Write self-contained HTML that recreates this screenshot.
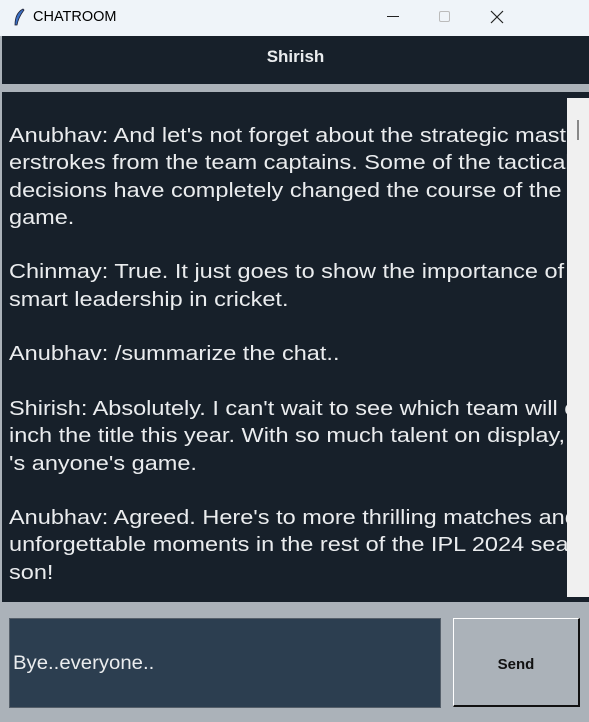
<!DOCTYPE html>
<html><head><style>
*{margin:0;padding:0;box-sizing:border-box}
body{width:589px;height:722px;overflow:hidden;background:#abb2b9;font-family:"Liberation Sans",sans-serif;position:relative}
.tb{position:absolute;left:0;top:0;width:589px;height:36px;background:#eff4f9}
.tb .t{position:absolute;left:33px;top:9px;font-size:14.5px;color:#000}
.hdr{position:absolute;left:2px;top:36px;width:587px;height:48px;background:#17202a;color:#eaecee;font-weight:bold;font-size:17px;text-align:center;line-height:42px}
.gb{position:absolute;left:0;top:84px;width:589px;height:8px;background:#abb2b9}
.chat{position:absolute;left:2px;top:92px;width:587px;height:510px;background:#17202a;overflow:hidden}
.clip{position:absolute;left:0;top:0;width:565px;height:510px;overflow:hidden}
.txt{position:absolute;left:7px;top:31px;color:#eaecee;font-size:20px;line-height:27.3px;white-space:pre;transform:scaleX(1.175);transform-origin:0 0}
.sb{position:absolute;left:565px;top:6px;width:22px;height:499px;background:#f0f0f0}
.sb i{position:absolute;left:10px;top:22px;width:2px;height:20px;background:#888}
.inp{position:absolute;left:9px;top:618px;width:432px;height:90px;background:#2c3e50;border:1px solid #555f6a}
.inp span{position:absolute;left:3px;top:34px;color:#eaecee;font-size:19px;transform:scaleX(1.07);transform-origin:0 0}
.btn{position:absolute;left:453px;top:618px;width:127px;height:89px;background:#abb2b9;border-top:1px solid #fff;border-left:1px solid #fff;border-right:2px solid #111;border-bottom:2px solid #111;text-align:center;line-height:92px;font-weight:bold;font-size:15px;color:#111}
</style></head><body>
<div class="tb"><svg style="position:absolute;left:12px;top:8px" width="14" height="20" viewBox="0 0 14 20"><path d="M11 1 C5 4 3 10 3 17 L5 17 C6 11 9 6 12 2Z" fill="#3a6fc4" stroke="#223" stroke-width=".8"/></svg><span class="t">CHATROOM</span>
<div style="position:absolute;left:387px;top:16px;width:12px;height:1px;background:#222"></div>
<div style="position:absolute;left:439px;top:11px;width:11px;height:11px;border:1px solid #bbb;border-radius:2px"></div>
<svg style="position:absolute;left:490px;top:10px" width="14" height="14"><path d="M1 1L13 13M13 1L1 13" stroke="#222" stroke-width="1.2"/></svg></div>
<div class="hdr">Shirish</div>
<div class="gb"></div>
<div class="chat"><div class="clip"><div class="txt">Anubhav: And let's not forget about the strategic mast
erstrokes from the team captains. Some of the tactical
decisions have completely changed the course of the
game.

Chinmay: True. It just goes to show the importance of
smart leadership in cricket.

Anubhav: /summarize the chat..

Shirish: Absolutely. I can't wait to see which team will c
inch the title this year. With so much talent on display, it
's anyone's game.

Anubhav: Agreed. Here's to more thrilling matches and
unforgettable moments in the rest of the IPL 2024 sea
son!</div></div><div class="sb"><i></i></div></div>
<div class="inp"><span>Bye..everyone..</span></div>
<div class="btn">Send</div>
</body></html>
